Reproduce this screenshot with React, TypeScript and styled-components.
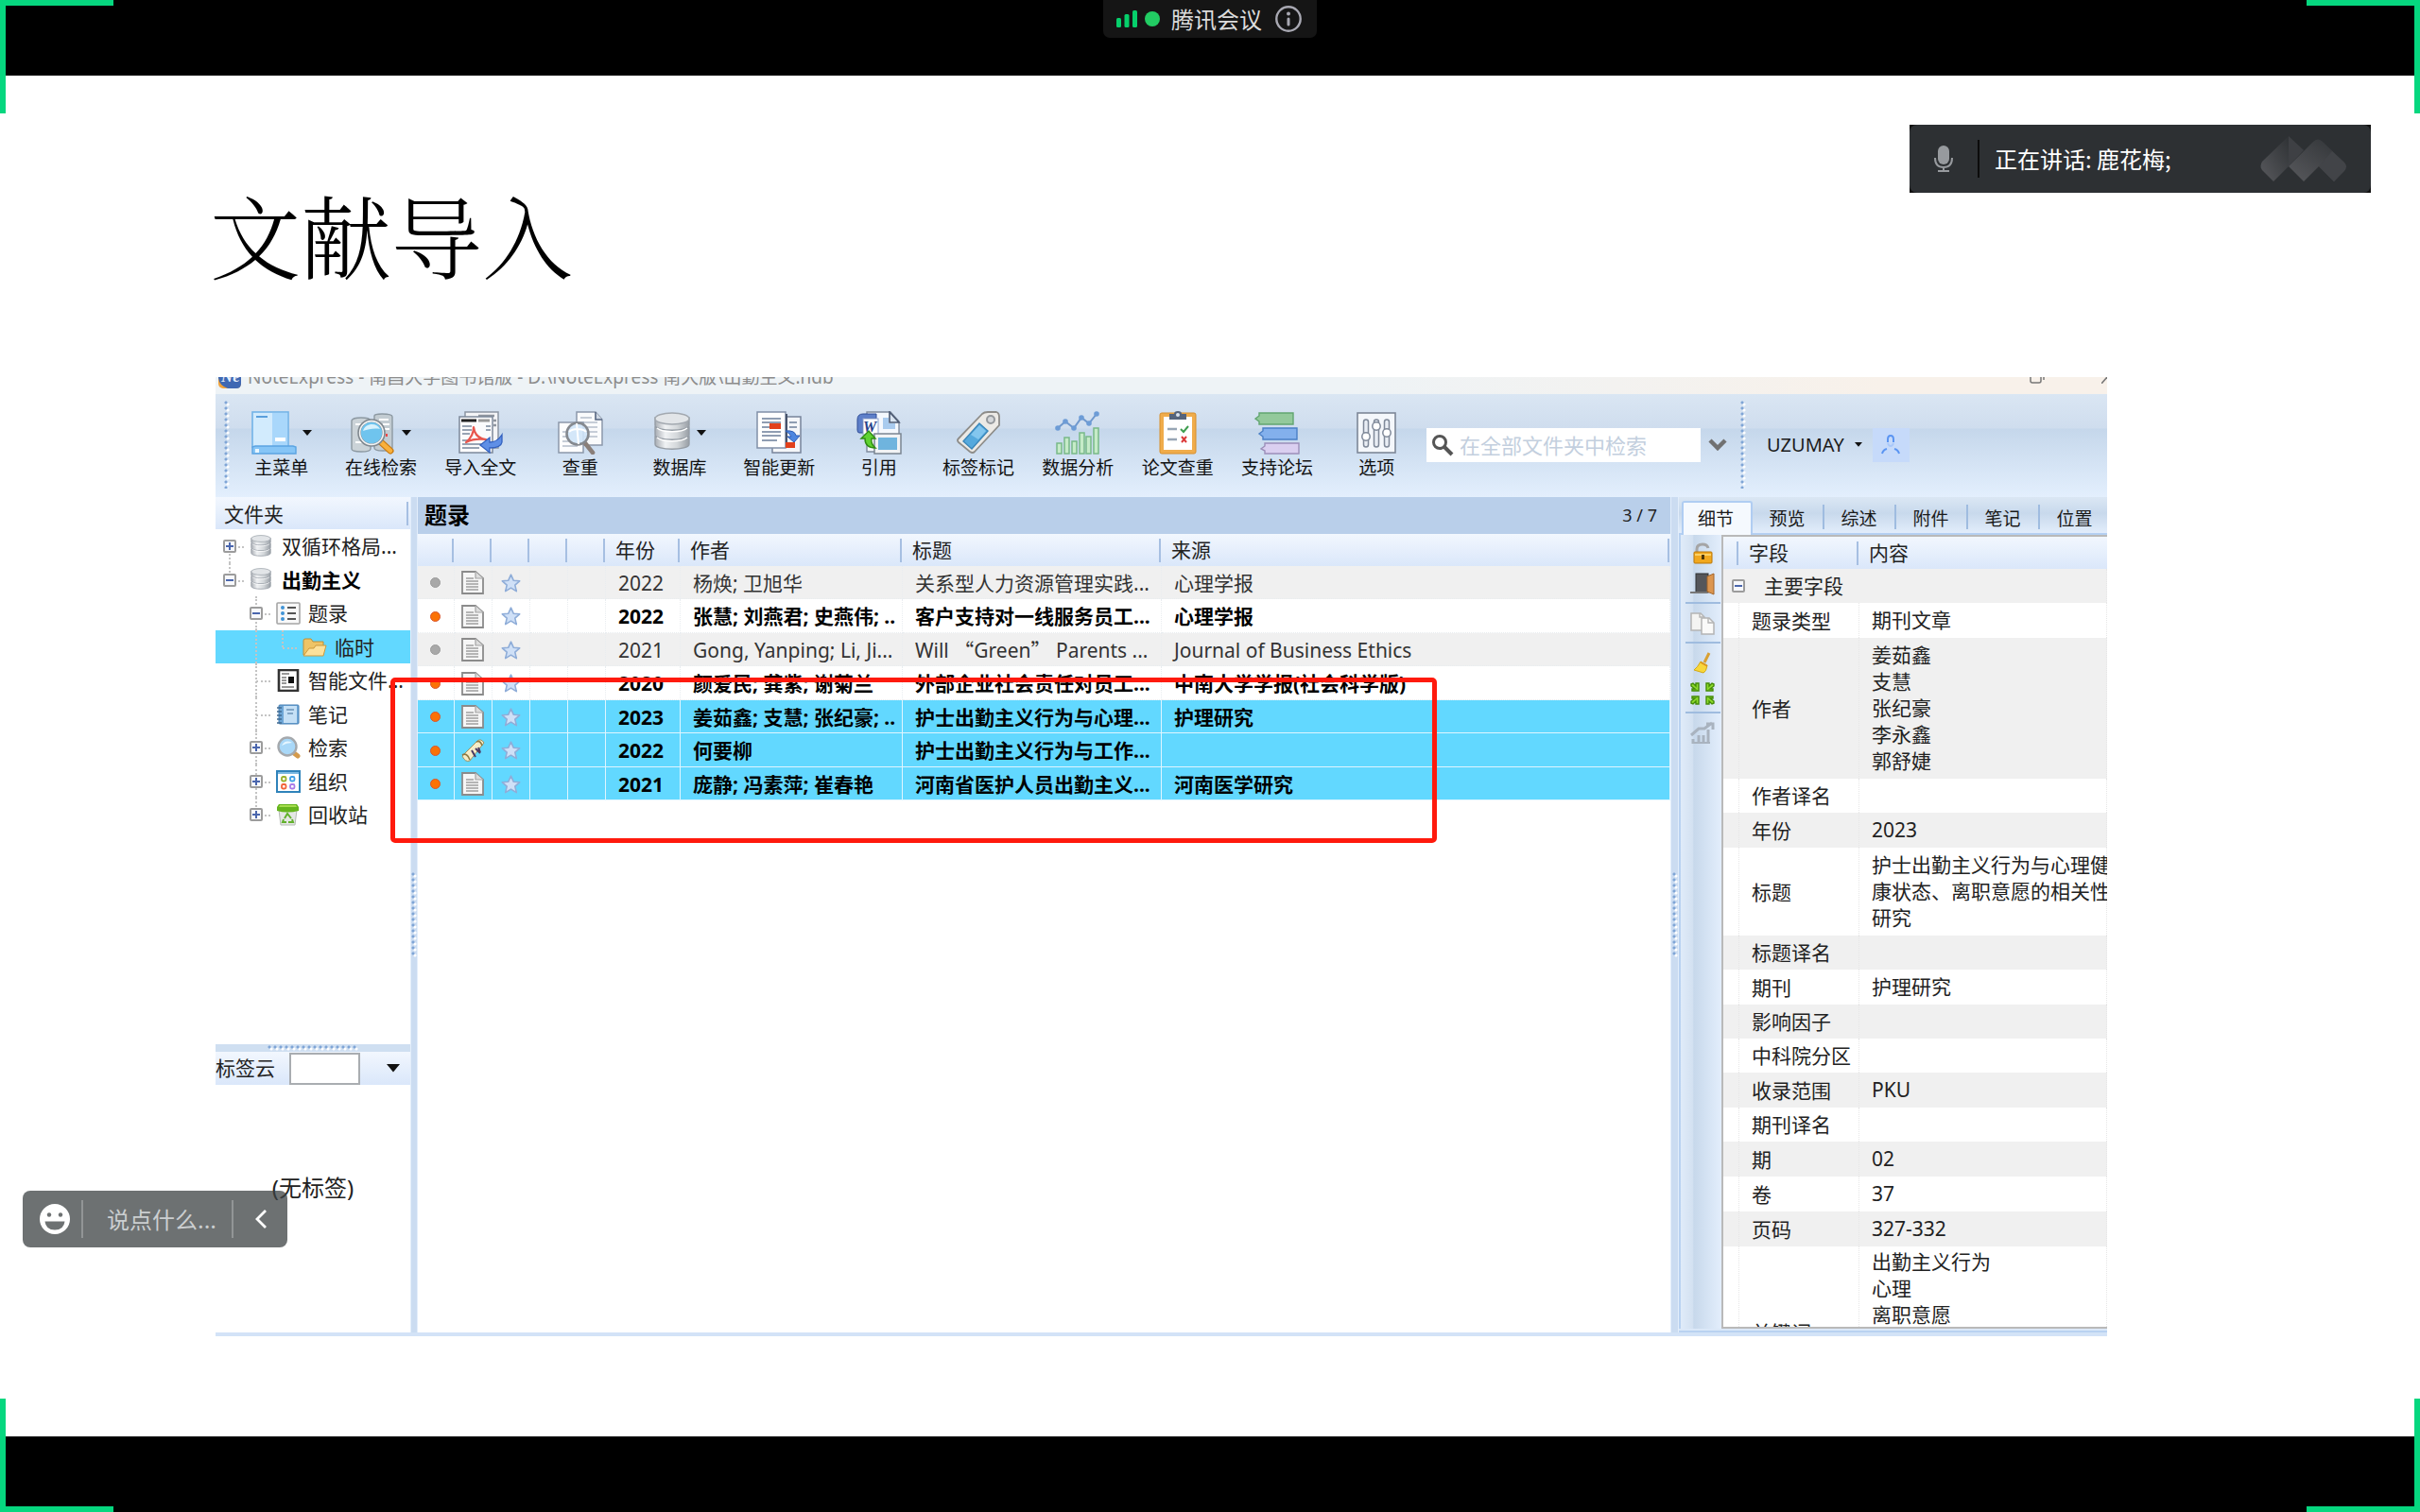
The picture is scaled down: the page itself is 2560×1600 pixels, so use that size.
import React from "react";
import styled, { createGlobalStyle, css } from "styled-components";

const sans = `"Noto Sans", "Noto Sans CJK SC", sans-serif`;
const cjk = `"Noto Sans CJK SC", "Noto Sans", sans-serif`;

const GlobalStyle = createGlobalStyle`
  *, *::before, *::after { box-sizing: border-box; }
  body { margin: 0; background: #fff; font-family: ${sans}; color: #222; }
  button, input { font: inherit; color: inherit; }
  button { padding: 0; border: 0; background: none; cursor: pointer; }
  svg { display: block; flex: none; }
`;

/* ---------- meeting shell ---------- */

const Page = styled.div`
  position: relative;
  display: flex;
  flex-direction: column;
  height: 100vh;
  min-height: 900px;
  overflow: hidden;
`;

const Letterbox = styled.div`
  display: flex;
  flex: none;
  justify-content: center;
  align-items: flex-start;
  height: 80px;
  background: #000;
`;

const Corner = styled.i<{ $v: "top" | "bottom"; $h: "left" | "right" }>`
  position: absolute;
  z-index: 3;
  width: 120px;
  height: 120px;
  pointer-events: none;
  ${({ $v, $h }) => css`
    ${$v}: 0;
    ${$h}: 0;
    border-${$v}: 6px solid #06d77f;
    border-${$h}: 6px solid #06d77f;
  `}
`;

const MeetingPill = styled.div`
  display: flex;
  align-items: center;
  height: 40px;
  padding: 0 16px 0 14px;
  border-radius: 0 0 7px 7px;
  background: #151515;
  color: #dcdcdc;
  font: 24px/40px ${cjk};
`;

const LiveDot = styled.i`
  width: 16px;
  height: 16px;
  margin: 0 12px 0 8px;
  border-radius: 50%;
  background: #22cc63;
`;

const InfoButton = styled.button`
  margin-left: 14px;
`;

const Speaker = styled.div`
  position: absolute;
  top: 132px;
  right: 52px;
  width: 488px;
  background: #111;
`;

const SpeakerInner = styled.div`
  display: flex;
  align-items: center;
  height: 72px;
  padding: 0 25px;
  border-radius: 8px;
  background: #2d3033;
  color: #fff;
  font: 24px/40px ${cjk};
`;

const SpeakerRule = styled.i`
  width: 2px;
  height: 40px;
  margin: 0 16px 0 25px;
  background: #0c0c0c;
`;

const SpeakerName = styled.span`
  flex: 1;
`;

const ChatPill = styled.form`
  position: absolute;
  left: 24px;
  bottom: 280px;
  z-index: 2;
  display: flex;
  align-items: center;
  width: 280px;
  height: 60px;
  padding: 0 22px 0 18px;
  border-radius: 8px;
  background: rgba(60, 65, 67, 0.75);
`;

const ChatInput = styled.input`
  flex: 1;
  min-width: 0;
  height: 40px;
  margin: 0 23px 0 12px;
  padding: 0 0 0 25px;
  border: solid #929596;
  border-width: 0 2px;
  outline: 0;
  background: transparent;
  color: #fff;
  font: 24px/40px ${cjk};
  &::placeholder { color: #cbced0; opacity: 1; }
`;

/* ---------- slide ---------- */

const Slide = styled.main`
  display: flex;
  flex: 1;
  flex-direction: column;
  min-height: 0;
  background: #fff;
`;

const SlideTitle = styled.h1`
  flex: none;
  margin: 119px 222px 104px;
  color: #000;
  font: 300 96px/96px "Noto Serif CJK SC", "Noto Sans CJK SC", serif;
`;

const Window = styled.section`
  position: relative;
  display: flex;
  flex: 1;
  flex-direction: column;
  min-height: 0;
  margin: 0 331px 106px 228px;
  border-bottom: 4px solid #d3e3f7;
`;

const TitleBar = styled.header`
  display: flex;
  flex: none;
  align-items: flex-start;
  height: 18px;
  padding-left: 2px;
  overflow: hidden;
  background: linear-gradient(90deg, #eef3f6 60%, #f8f1ea 88%);
  color: #8c8c8c;
`;

const TitleText = styled.span`
  align-self: flex-end;
  margin-left: 6px;
  padding-bottom: 6px;
  font-size: 19px;
  line-height: 24px;
  white-space: pre;
`;

const WindowButtons = styled.div`
  display: flex;
  gap: 60px;
  margin-left: auto;
`;

/* ---------- toolbar ---------- */

const Toolbar = styled.nav`
  display: flex;
  flex: none;
  align-items: center;
  height: 109px;
  padding: 0 0 2px 9px;
  background: linear-gradient(#dae6f3, #cfddee 33%, #c5d7eb 34%, #e3effd);
`;

const dots = css`
  background:
    radial-gradient(circle at 2px 2px, #7fa5d6 1px, transparent 2px) 0 0 / 6px 6px,
    radial-gradient(circle at 4px 4px, #fff 1px, transparent 2px) 0 0 / 6px 6px;
`;

const ToolGrip = styled.i`
  width: 6px;
  height: 93px;
  ${dots}
`;

const ToolList = styled.div`
  display: grid;
  grid-template-columns: repeat(12, 1fr);
  width: 1264px;
  margin-left: 2px;
`;

const ToolButton = styled.button`
  display: flex;
  flex-direction: column;
  align-items: center;
  color: #111;
  font: 19px/25px ${cjk};
`;

const ToolIcon = styled.span`
  display: flex;
  align-items: center;
  gap: 6px;
  height: 46px;
`;

const SearchBox = styled.label`
  display: flex;
  align-items: center;
  width: 290px;
  height: 36px;
  padding: 0 5px;
  background: #fff;
`;

const SearchInput = styled.input`
  flex: 1;
  min-width: 0;
  padding: 0 0 2px;
  margin-left: 6px;
  border: 0;
  outline: 0;
  background: none;
  font: 22px/32px ${cjk};
  &::placeholder { color: #c3cfde; opacity: 1; }
`;

const SearchMore = styled.button`
  margin: 0 14px 0 8px;
`;

const UserButton = styled.button`
  display: flex;
  align-items: center;
  gap: 11px;
  margin-left: 22px;
  color: #1c1c1c;
  font-size: 20px;
  line-height: 36px;
`;

const Avatar = styled.span`
  display: flex;
  align-items: center;
  justify-content: center;
  width: 39px;
  height: 36px;
  background: #c6dafa;
`;

/* ---------- workspace ---------- */

const Workspace = styled.div`
  display: flex;
  flex: 1;
  min-height: 0;
`;

const Splitter = styled.div<{ $w: number }>`
  display: flex;
  flex: none;
  align-items: center;
  justify-content: center;
  width: ${({ $w }) => $w}px;
  border: solid #e3eefb;
  border-width: 0 1px;
  background: #cbdcf1;
  &::before {
    content: "";
    width: 6px;
    height: 90px;
    ${dots}
  }
`;

const headFill = css`
  background-color: #e3edfb;
  background-image: linear-gradient(#f2f7fe, #dae7fa);
`;

const Sidebar = styled.aside`
  display: flex;
  flex: none;
  flex-direction: column;
  width: 206px;
  background: #fff;
`;

const SideHead = styled.h2`
  display: flex;
  flex: none;
  align-items: center;
  justify-content: space-between;
  height: 34px;
  margin: 0;
  padding: 0 2px 0 9px;
  font: 21px/34px ${cjk};
  ${headFill}
  &::after {
    content: "";
    width: 2px;
    height: 25px;
    background: #a6bfe2;
  }
`;

const Tree = styled.ul`
  flex: 1;
  min-height: 0;
  margin: 0;
  padding: 0;
  list-style: none;
`;

const TreeRow = styled.li<{ $selected?: boolean; $bold?: boolean }>`
  display: flex;
  align-items: center;
  height: 35px;
  padding-left: 8px;
  overflow: hidden;
  font-size: 21px;
  line-height: 34px;
  font-weight: ${({ $bold }) => ($bold ? 700 : 400)};
  color: ${({ $bold }) => ($bold ? "#000" : "#222")};
  background: ${({ $selected }) => ($selected ? "#62d8ff" : "transparent")};
  white-space: nowrap;
  &:nth-child(odd) { height: 36px; }
`;

const Guide = styled.span<{ $line: "none" | "full" | "top" | "bottom"; $branch?: boolean }>`
  position: relative;
  display: flex;
  flex: none;
  align-items: center;
  align-self: stretch;
  width: 28px;
  &::before {
    content: "";
    position: absolute;
    left: 6px;
    top: ${({ $line }) => ($line === "bottom" ? "50%" : "0")};
    bottom: ${({ $line }) => ($line === "top" ? "50%" : "0")};
    border-left: ${({ $line }) => ($line === "none" ? "0" : "2px dotted #c4c4c4")};
  }
  &::after {
    content: "";
    position: absolute;
    left: 7px;
    width: 15px;
    top: 50%;
    border-top: ${({ $branch }) => ($branch ? "2px dotted #c4c4c4" : "0")};
  }
`;

const Expander = styled.button`
  position: relative;
  z-index: 1;
  display: flex;
  align-items: center;
  justify-content: center;
  width: 14px;
  height: 14px;
  border: 2px solid #9c9c9c;
  border-radius: 2px;
  background: #f7f8fb;
`;

const TreeIcon = styled.span`
  display: flex;
  flex: none;
  width: 26px;
  margin-right: 8px;
`;

const TagSplitter = styled.div`
  display: flex;
  flex: none;
  justify-content: center;
  align-items: center;
  height: 8px;
  background: #cfdff1;
  &::before {
    content: "";
    width: 96px;
    height: 6px;
    ${dots}
  }
`;

const TagHead = styled.div`
  display: flex;
  flex: none;
  align-items: center;
  height: 35px;
  font: 21px/34px ${cjk};
  ${headFill}
`;

const TagLabel = styled.label`
  padding-bottom: 4px;
`;

const TagInput = styled.input`
  width: 75px;
  height: 34px;
  margin: 0 28px 0 15px;
  padding: 0 6px;
  border: 2px solid #a9adb1;
  border-radius: 0;
  outline: 0;
  background: #fff;
`;

const TagEmpty = styled.p`
  flex: none;
  height: 262px;
  margin: 0;
  padding-top: 91px;
  text-align: center;
  font-size: 24px;
  line-height: 36px;
`;

/* ---------- records ---------- */

const Records = styled.section`
  flex: 1;
  min-width: 0;
  overflow: hidden;
  background: #fff;
`;

const RecordsBar = styled.div`
  display: flex;
  align-items: center;
  justify-content: space-between;
  height: 39px;
  padding: 0 14px 2px 7px;
  background: #b9cfea;
  font-size: 18px;
`;

const RecordsTitle = styled.h2`
  margin: 0;
  padding-bottom: 2px;
  color: #000;
  font: 700 24px/34px ${cjk};
`;

const Grid = styled.table`
  width: 100%;
  table-layout: fixed;
  border-collapse: separate;
  border-spacing: 0;
  font-size: 21px;
  text-align: left;
`;

const GridHead = styled.th<{ $open?: boolean }>`
  height: 34px;
  padding: 0 0 0 10px;
  font-weight: 400;
  line-height: 32px;
  background-image: linear-gradient(#a6bfe2, #a6bfe2), linear-gradient(#f2f7fe, #dae7fa);
  background-position: right 1px center, 0 0;
  background-repeat: no-repeat;
  background-size: ${({ $open }) => ($open ? "0 0" : "2px 25px")}, 100% 100%;
`;

const Cell = styled.td<{ $icon?: boolean }>`
  padding: ${({ $icon }) => ($icon ? "1px 1px 0 0" : "1px 0 0 13px")};
  overflow: hidden;
  border: 0 dotted #e9edf0;
  border-width: 0 1px 1px 0;
  line-height: 32px;
  white-space: nowrap;
  & > svg { margin: 0 auto; }
`;

const RecordRow = styled.tr<{ $unread?: boolean; $selected?: boolean }>`
  height: 35px;
  font-weight: ${({ $unread }) => ($unread ? 700 : 400)};
  color: ${({ $unread }) => ($unread ? "#000" : "#333")};
  background: ${({ $unread, $selected }) => ($selected ? "#62d8ff" : $unread ? "#fff" : "#f0f0f0")};
  &:nth-child(even) { height: 36px; }
  ${({ $selected }) => $selected && css`
    ${Cell} { border-color: #dff5ff; border-style: solid; }
  `}
`;

const StateDot = styled.i<{ $on?: boolean }>`
  display: block;
  width: 11px;
  height: 11px;
  margin: 0 auto;
  border: 1px solid ${({ $on }) => ($on ? "#d9562f" : "#9b9b9b")};
  border-radius: 50%;
  background: ${({ $on }) => ($on ? "#fb7206" : "#a8a8a8")};
`;

const Quote = styled.span`
  font-family: ${cjk};
`;

const Callout = styled.div`
  position: absolute;
  left: 185px;
  top: 318px;
  width: 1107px;
  height: 175px;
  border: 5px solid #ff1a0d;
  border-radius: 5px;
  pointer-events: none;
`;

/* ---------- details ---------- */

const Details = styled.section`
  display: flex;
  flex: none;
  flex-direction: column;
  width: 453px;
  overflow: hidden;
  background: #dbe8f8;
  border-bottom: 2px solid #b9d2f1;
`;

const Tabs = styled.div`
  display: flex;
  flex: none;
  height: 40px;
  padding-left: 3px;
  border-bottom: 2px solid #b5d0f2;
  background: linear-gradient(#dbe7f4, #c8d9ec 45%, #e2edfb);
`;

const Tab = styled.button<{ $active?: boolean }>`
  flex: none;
  padding: 0 3px 3px 0;
  font: 19px/28px ${cjk};
  color: #1a1a1a;
  ${({ $active }) => $active ? css`
    width: 75px;
    height: 36px;
    margin-top: 4px;
    border: 2px solid #b0cdf2;
    border-bottom: 0;
    border-radius: 3px 3px 0 0;
    background: #f5f9fe;
  ` : css`
    width: 76px;
    height: 30px;
    margin-top: 8px;
    background: linear-gradient(#9fbce0, #9fbce0) right 0 top 0 / 2px 26px no-repeat;
  `}
`;

const DetailBody = styled.div`
  display: flex;
  flex: 1;
  min-height: 0;
  padding-bottom: 2px;
`;

const DetailTools = styled.div`
  display: flex;
  flex: none;
  flex-direction: column;
  align-items: center;
  gap: 6px;
  width: 45px;
  padding: 7px 0 0 3px;
  border-left: 2px solid #b9d2f1;
  background: linear-gradient(90deg, #e0ebf9, #d3e1f1 30%, #c7d8eb 32%, #e3eefc);
`;

const ToolRule = styled.hr`
  width: 37px;
  height: 2px;
  margin: 0 0 2px;
  border: 0;
  background: #9fbcdf;
`;

const DetailScroll = styled.div`
  flex: 1;
  min-width: 0;
  overflow: hidden;
  border: solid #b9b9b9;
  border-width: 2px 0 2px 2px;
  background: #fff;
`;

const FieldTable = styled.table`
  width: 100%;
  table-layout: fixed;
  border-collapse: separate;
  border-spacing: 0;
  font-size: 21px;
  line-height: 28px;
  text-align: left;
  white-space: nowrap;
`;

const FieldRow = styled.tr`
  height: 36px;
  &:nth-child(odd) { background: #f0f0f0; }
  & > td, & > th {
    padding: 4px 0 5px 13px;
    border: 0 dotted #e6e6e6;
    border-width: 0 1px 0 0;
    font-weight: 400;
  }
  & > th, & > td:empty { padding-top: 0; padding-bottom: 0; }
`;

const OpenFieldRow = styled(FieldRow)`
  height: 181px;
  & > td { padding-top: 2px; vertical-align: top; }
`;

const GroupCell = styled.div`
  display: flex;
  align-items: center;
  gap: 20px;
  height: 26px;
  margin-left: -4px;
`;

const Line = styled.div``;

/* ---------- icons ---------- */

const Minus = ({ plus }: { plus?: boolean }) => (
  <svg width="10" height="10" viewBox="0 0 10 10" stroke="#4a66ad" strokeWidth="2">
    <path d={plus ? "M1 5h8M5 1v8" : "M1 5h8"} />
  </svg>
);

const Caret = ({ w = 10 }: { w?: number }) => (
  <svg width={w} height={w * 0.6} viewBox="0 0 10 6"><path d="M0 0h10L5 6z" fill="#111" /></svg>
);

const Cylinder = ({ w, h }: { w: number; h: number }) => (
  <svg width={w} height={h} viewBox="0 0 38 44">
    <defs>
      <linearGradient id="cyl" x1="0" x2="1">
        <stop offset="0" stopColor="#a8adb3" /><stop offset=".3" stopColor="#f0f2f4" />
        <stop offset=".65" stopColor="#d3d7da" /><stop offset="1" stopColor="#989ea5" />
      </linearGradient>
    </defs>
    {[30, 20, 10].map((y) => (
      <path key={y} d={`M1 ${y - 4}v8c0 7 36 7 36 0v-8z`} fill="url(#cyl)" stroke="#969da5" strokeWidth="1.4" />
    ))}
    <ellipse cx="19" cy="7" rx="18" ry="6" fill="#e2e5e8" stroke="#a3a9b0" strokeWidth="1.4" />
    <path d="M3 17c6 5 26 5 32 0M3 27c6 5 26 5 32 0" fill="none" stroke="#fff" strokeWidth="1.3" />
  </svg>
);

const Ic = ({ children }: { children: React.ReactNode }) => (
  <svg width="48" height="46" viewBox="0 0 48 46">{children}</svg>
);

const MenuIcon = () => (
  <Ic>
    <rect x="1" y="1" width="38" height="37" fill="#d2ebfd" stroke="#72b3e8" strokeWidth="1.6" />
    <rect x="22" y="2" width="16" height="35" fill="#a9d7fb" />
    <path d="M5 6h12" stroke="#5a9fdc" strokeWidth="2" />
    <rect x="25" y="28" width="11" height="4" fill="#fff" />
    <path d="M1 38l3-1h40l3 1v7H1z" fill="#86c5f6" stroke="#5ba4e2" strokeWidth="1.4" />
    <rect x="4" y="40" width="4" height="4" fill="#e9f6ff" />
  </Ic>
);

const OnlineIcon = () => (
  <Ic>
    <path d="M25 5q0-2 8-2 11 0 11 3v33q0 3-10 3-9 0-9-3z" fill="#c3ccd2" stroke="#8d99a2" strokeWidth="1.4" />
    <path d="M1 10q1-3 10-3t10 3v30q0 3-10 3T1 40z" fill="#cbd3d8" stroke="#8d99a2" strokeWidth="1.4" />
    <path d="M5 14h12M5 33h8M30 9h10M34 14h7M36 19h5" stroke="#fff" strokeWidth="2" />
    <path d="M31 32l11 10" stroke="#c77a12" strokeWidth="7" strokeLinecap="round" />
    <path d="M31 32l11 10" stroke="#f9b03b" strokeWidth="4.5" strokeLinecap="round" />
    <circle cx="22" cy="23" r="13" fill="#6fc4ee" stroke="#80888f" strokeWidth="3.6" />
    <circle cx="22" cy="23" r="12.4" fill="none" stroke="#f2f4f5" strokeWidth="1.6" />
    <path d="M13 21c2-8 14-10 18-2-6-1-12 0-18 2z" fill="#d8f2fd" />
    <path d="M38 24v3" stroke="#e44" strokeWidth="2" />
  </Ic>
);

const ImportIcon = () => (
  <Ic>
    <path d="M8 1h35v38H8z" fill="#f4f5f7" stroke="#8c95a3" strokeWidth="1.5" />
    <path d="M22 5h17M38 10h3M38 15h3" stroke="#8f959e" strokeWidth="2.4" />
    <path d="M2 6h35v38H2z" fill="#fbfbfc" stroke="#7d899b" strokeWidth="1.5" />
    <path d="M4 10h16" stroke="#222" strokeWidth="3" />
    <path d="M22 10h12" stroke="#999" strokeWidth="3" />
    <path d="M5 16h10M5 20h10M5 24h8M5 31h6M5 35h22M5 39h18M30 16h5M30 20h5" stroke="#98a3b3" strokeWidth="2" />
    <path d="M9 33c5-4 8-9 8-16 1 8 5 12 13 13-8-1-15 0-21 3z" fill="none" stroke="#e8564d" strokeWidth="2.2" strokeLinejoin="round" />
    <path d="M47 25v8q-1 6-13 6v5l-10-8 10-8v5q8 0 13-8z" fill="#5f8fe6" stroke="#3260bf" strokeWidth="1.3" />
  </Ic>
);

const CheckDupIcon = () => (
  <Ic>
    <path d="M20 1h20l7 8v27H20z" fill="#fafbfc" stroke="#8c98ab" strokeWidth="1.5" />
    <path d="M40 1v8h7" fill="#cfd8e4" stroke="#566681" strokeWidth="1.6" />
    <path d="M24 7h12M24 12h18M24 17h18M24 22h18M24 27h18" stroke="#c6cdd7" strokeWidth="2" />
    <path d="M1 12h26v32H1z" fill="#fdfdfe" stroke="#8c98ab" strokeWidth="1.5" />
    <path d="M5 22h6M5 27h6M5 32h8M5 37h16" stroke="#c6cdd7" strokeWidth="2" />
    <path d="M29 34l8 10" stroke="#8a7f79" strokeWidth="4.6" strokeLinecap="round" />
    <circle cx="21" cy="24" r="11.5" fill="#cfe4f8" fillOpacity=".9" stroke="#85898f" strokeWidth="2.6" />
    <path d="M12 22c4-4 14-4 18 0M20 13l2 22" stroke="#fff" strokeWidth="2" fill="none" />
  </Ic>
);

const UpdateIcon = () => (
  <Ic>
    <path d="M17 6h30v38H17z" fill="#f4f6f9" stroke="#77849a" strokeWidth="1.5" />
    <path d="M1 1h30v38H1z" fill="#fff" stroke="#8190a8" strokeWidth="1.5" />
    <path d="M32 3v36" stroke="#46536b" strokeWidth="2" />
    <path d="M6 8h20M6 12h20M6 17h8M6 22h20M6 26h20M6 31h16M35 12h8M35 17h8" stroke="#8f9db2" strokeWidth="2" />
    <rect x="14" y="13" width="12" height="6" fill="#e2401b" />
    <rect x="31" y="33" width="10" height="6" fill="#e2401b" />
    <path d="M31 21q10-1 11 5h4l-6 7-7-6h4q-1-3-6-6z" fill="#4d86e0" stroke="#2c5cb5" />
  </Ic>
);

const CiteIcon = () => (
  <Ic>
    <path d="M11 1h25l9 10v32H11z" fill="#f4f8fd" stroke="#7f8b9c" strokeWidth="1.4" />
    <path d="M35 1v11h10z" fill="#d9e4f0" stroke="#4c5a72" strokeWidth="1.6" />
    <path d="M28 7h6v6h7v6H28z" fill="#a9cbee" />
    <path d="M1 9q0-6 6-6h14v5H9q-2 0-2 3v12H3q-2 0-2-3z" fill="#5d7fc9" stroke="#2f4c96" />
    <rect x="7" y="8" width="16" height="17" fill="#fff" stroke="#8fa3d0" />
    <text x="7" y="22" fontSize="16" fontWeight="700" fontStyle="italic" fill="#27418a" fontFamily="Liberation Serif, serif">W</text>
    <path d="M19 24h28v21H19z" fill="#f1f3f5" stroke="#7a8591" strokeWidth="1.5" />
    <rect x="23" y="28" width="20" height="13" fill="#6fb4de" />
    <path d="M5 29l8-8 7 8h-4q-1 6 4 10-11 0-11-10z" fill="#5fd232" stroke="#2f8c12" strokeWidth="1.4" />
  </Ic>
);

const TagIcon = () => (
  <Ic>
    <path d="M28 3q2-2 6-2h9q3 1 3 5v9L20 43q-2 2-5 0L3 33q-2-2 0-4z" fill="#eceae6" stroke="#8d8c89" strokeWidth="1.8" />
    <circle cx="37" cy="9" r="4" fill="#d5d8db" stroke="#94989c" strokeWidth="2" />
    <path d="M25 13l9 8-17 19-9-8z" fill="#55a9dd" stroke="#3b87ba" strokeWidth="1.4" />
    <path d="M25 15l7 6-8 9-8-5z" fill="#83c6ee" />
  </Ic>
);

const AnalysisIcon = () => (
  <Ic>
    <path d="M3 18l8-7 9 7 8-11 8 6 8-10" fill="none" stroke="#6f98cd" strokeWidth="2" />
    {[[3, 18], [11, 11], [20, 18], [28, 7], [36, 13], [44, 3]].map(([x, y]) => (
      <circle key={x} cx={x} cy={y} r="2.8" fill="#6d9cd6" />
    ))}
    {[[2, 34], [10, 28], [18, 32], [26, 23], [33, 27], [41, 18]].map(([x, y]) => (
      <rect key={x} x={x} y={y} width="5" height={45 - y} fill="#c6ebc8" stroke="#78b988" strokeWidth="1.5" />
    ))}
  </Ic>
);

const ClipboardIcon = () => (
  <Ic>
    <rect x="5" y="2" width="38" height="43" rx="2" fill="#f0ac4b" stroke="#d78f2d" />
    <rect x="9" y="6" width="30" height="35" fill="#fff" />
    <path d="M15 3h5q0-3 4-3t4 3h5v6H15z" fill="#55647c" />
    <circle cx="24" cy="4" r="2" fill="#dbe3ee" />
    <path d="M13 19h10M13 30h10" stroke="#98a6b5" strokeWidth="2.4" />
    <path d="M27 19l3 3 5-6" fill="none" stroke="#3e9e4f" strokeWidth="2" />
    <path d="M28 27l5 6M33 27l-5 6" stroke="#dc3a3a" strokeWidth="2" />
  </Ic>
);

const ForumIcon = () => (
  <Ic>
    <path d="M5 2h36v12H5v-3L1 8l4-3z" fill="#93c99b" stroke="#62a570" strokeWidth="1.4" />
    <path d="M9 18h36v12H9v-3l-4-3 4-3z" fill="#83b0ec" stroke="#4a7fc6" strokeWidth="1.4" />
    <path d="M11 34h36v11H11v-3l-4-2 4-3z" fill="#dacff0" stroke="#9c8fb9" strokeWidth="1.4" />
  </Ic>
);

const OptionsIcon = () => (
  <Ic>
    <rect x="4" y="2" width="40" height="42" fill="#f4f7fb" stroke="#7d8798" strokeWidth="1.6" />
    {[[13, 27], [24, 16], [35, 23]].map(([x, y]) => (
      <g key={x} fill="#e9eef5" stroke="#7f8999" strokeWidth="1.5">
        <rect x={x - 2.5} y="9" width="5" height="29" rx="2.5" />
        <circle cx={x} cy={y} r="4.2" fill="#fff" />
      </g>
    ))}
  </Ic>
);

const ListIcon = () => (
  <svg width="26" height="24" viewBox="0 0 26 24">
    <rect x="1" y="1" width="24" height="22" rx="1" fill="#f8f8f8" stroke="#a5a5a5" strokeWidth="1.6" />
    {[6, 12, 18].map((y) => (
      <g key={y}><circle cx="7" cy={y} r="2" fill="#3f93d6" /><path d={`M12 ${y}h9`} stroke="#555" strokeWidth="2" /></g>
    ))}
  </svg>
);

const FolderIcon = () => (
  <svg width="26" height="20" viewBox="0 0 26 20">
    <path d="M1 18V3q0-2 2-2h6l2 3h11v14z" fill="#eec466" stroke="#c08f35" />
    <path d="M1 19l6-8h5l2-3h11l-3 11z" fill="#fde19a" stroke="#cc9a3d" />
  </svg>
);

const SmartIcon = () => (
  <svg width="26" height="24" viewBox="0 0 26 24">
    <rect x="3" y="1" width="20" height="22" fill="#fff" stroke="#333" strokeWidth="2.6" />
    <path d="M6 5h8M6 9h5M6 12h5M6 15h5M6 19h13" stroke="#777" strokeWidth="1.4" />
    <rect x="13" y="8" width="6" height="7" fill="#111" />
  </svg>
);

const NotebookIcon = () => (
  <svg width="26" height="22" viewBox="0 0 26 22">
    <rect x="3" y="1" width="21" height="20" rx="1" fill="#6ea6d6" stroke="#457fb4" />
    <rect x="8" y="2" width="14" height="18" fill="#c5e0f6" />
    <path d="M11 6h8M12 10h6" stroke="#6c93b7" strokeWidth="1.4" />
    <path d="M1 4h5M1 8h5M1 12h5M1 16h5M1 20h5" stroke="#3f6a90" strokeWidth="1.4" />
  </svg>
);

const LensIcon = () => (
  <svg width="26" height="24" viewBox="0 0 26 24">
    <path d="M19 18l4 3" stroke="#d49a4c" strokeWidth="5" strokeLinecap="round" />
    <circle cx="12" cy="11" r="9.5" fill="#a9d8f8" stroke="#a5a9ad" strokeWidth="2.4" />
    <path d="M6 10q4-7 11-3-6 0-11 3z" fill="#e7f6ff" />
  </svg>
);

const GroupIcon = () => (
  <svg width="26" height="24" viewBox="0 0 26 24">
    <rect x="1" y="1" width="24" height="22" fill="#fff" stroke="#2f83ba" strokeWidth="2" />
    <path d="M2 3h22" stroke="#7cb9e2" strokeWidth="2" />
    {[[6, 7, "#98b02a"], [15, 7, "#3fa0e6"], [6, 15, "#f2633a"], [15, 15, "#a97be8"]].map(([x, y, c]) => (
      <rect key={`${x}${y}`} x={x as number} y={y as number} width="4.5" height="4.5" rx="1.5" fill="none" stroke={c as string} strokeWidth="1.8" />
    ))}
  </svg>
);

const BinIcon = () => (
  <svg width="26" height="24" viewBox="0 0 26 24">
    <path d="M3 7h19l-2 16H5z" fill="#e4e7e4" stroke="#b4bab3" />
    <path d="M3 1h19l2 3v4q-12 3-23 0V4z" fill="#66b51e" />
    <path d="M4 2h17l1 2H3z" fill="#a4dc4c" />
    <path d="M9 16l3-5 4 5M17 17l1 3h-5M8 17l-1 3h4" fill="none" stroke="#62b12d" strokeWidth="2" />
  </svg>
);

const PaperIcon = () => (
  <svg width="24" height="25" viewBox="0 0 24 25">
    <path d="M1 1h14l8 7v16H1z" fill="#f6f6f6" stroke="#8b8b8b" strokeWidth="1.8" />
    <path d="M15 1v7h8" fill="#ddd" stroke="#a5a5a5" strokeWidth="1.2" />
    <path d="M5 8h8M5 11h13M5 14h13M5 17h13M5 20h13" stroke="#a0a0a0" strokeWidth="1.6" />
  </svg>
);

const ScrollIcon = () => (
  <svg width="26" height="25" viewBox="0 0 26 25">
    <path d="M2 18L18 2q4-3 7 2L10 23q-5 2-8-5z" fill="#f6ecc7" stroke="#a38f5c" />
    <path d="M2 17q5-3 8 5M17 3q4-2 6 4" fill="none" stroke="#8d7a45" strokeWidth="1.6" />
    <path d="M12 12l4 7M16 10l5 5M19 9l2 5" stroke="#4a3a63" strokeWidth="2" />
  </svg>
);

const StarIcon = () => (
  <svg width="21" height="20" viewBox="0 0 21 20">
    <path d="M10.500 1.200l2.700 6 6.500.6-4.900 4.300 1.500 6.500-5.800-3.500-5.800 3.500 1.500-6.500L1.300 7.800l6.500-.6z" fill="#cfe0f7" stroke="#8fadd8" strokeWidth="1.6" strokeLinejoin="round" />
  </svg>
);

const Ic26 = ({ children }: { children: React.ReactNode }) => (
  <svg width="26" height="26" viewBox="0 0 26 26">{children}</svg>
);

const LockIcon = () => (
  <Ic26>
    <path d="M7 12V8q0-5 6-5 5 0 6 4" fill="none" stroke="#a5a5a5" strokeWidth="3" />
    <rect x="4" y="11" width="19" height="12" rx="1" fill="#f1a81e" stroke="#b97708" />
    <path d="M5 14h17" stroke="#fbd167" strokeWidth="2" />
    <path d="M13.500 14v5" stroke="#4f3606" strokeWidth="3" />
  </Ic26>
);
const DoorIcon = () => (
  <Ic26>
    <rect x="6" y="2" width="13" height="20" fill="#55565a" stroke="#2f3033" />
    <path d="M18 5l7-3v22l-7-3z" fill="#dc9650" stroke="#a3652a" />
    <path d="M0 22h18" stroke="#777" strokeWidth="2" />
  </Ic26>
);
const CopyIcon = () => (
  <Ic26>
    <path d="M1 2h10l4 4v14H1z" fill="#f4f4f2" stroke="#b4b4b4" strokeWidth="1.5" />
    <path d="M12 7h8l5 5v12H12z" fill="#fafaf9" stroke="#b4b4b4" strokeWidth="1.5" />
    <path d="M10 2v4h5M19 7v5h6" fill="none" stroke="#b4b4b4" strokeWidth="1.4" />
  </Ic26>
);
const BroomIcon = () => (
  <Ic26>
    <path d="M20 2l-5 10" stroke="#d9a033" strokeWidth="3" />
    <path d="M11 11l7 4q-1 7-4 8l-10-3q4-3 7-9z" fill="#f8d73a" stroke="#d4a916" />
    <path d="M11 12l7 4" stroke="#dd8d21" strokeWidth="1.4" />
  </Ic26>
);
const ShrinkIcon = () => (
  <Ic26>
    <g fill="#8ddb2c" stroke="#448c08" strokeWidth="1.4">
      {["", "translate(26 0) scale(-1 1)", "translate(0 26) scale(1 -1)", "translate(26 26) scale(-1 -1)"].map((t) => (
        <path key={t} transform={t} d="M1 3l2-1 3 3V2h3v8H2V8h3L1 5z" />
      ))}
    </g>
  </Ic26>
);
const TrendIcon = () => (
  <Ic26>
    <g fill="none" stroke="#a9b3bf" strokeWidth="3">
      <path d="M1 15l8-7h6l8-6M17 3h7v6" />
      <path d="M3 19v5M9 15v9M14 15v9M19 9v15" />
      <path d="M2 23h19" strokeWidth="2" />
    </g>
  </Ic26>
);

/* ---------- data ---------- */

const tools: [string, React.ReactNode, boolean?][] = [
  ["主菜单", <MenuIcon />, true],
  ["在线检索", <OnlineIcon />, true],
  ["导入全文", <ImportIcon />],
  ["查重", <CheckDupIcon />],
  ["数据库", <Cylinder w={40} h={44} />, true],
  ["智能更新", <UpdateIcon />],
  ["引用", <CiteIcon />],
  ["标签标记", <TagIcon />],
  ["数据分析", <AnalysisIcon />],
  ["论文查重", <ClipboardIcon />],
  ["支持论坛", <ForumIcon />],
  ["选项", <OptionsIcon />],
];

type LineKind = "none" | "full" | "top" | "bottom";
interface Node {
  label: string;
  icon: React.ReactNode;
  lines: LineKind[];
  box?: "+" | "-";
  bold?: boolean;
  selected?: boolean;
}

const nodes: Node[] = [
  { label: "双循环格局...", icon: <Cylinder w={24} h={25} />, lines: ["bottom"], box: "+" },
  { label: "出勤主义", icon: <Cylinder w={24} h={25} />, lines: ["top"], box: "-", bold: true },
  { label: "题录", icon: <ListIcon />, lines: ["none", "full"], box: "-" },
  { label: "临时", icon: <FolderIcon />, lines: ["none", "full", "top"], selected: true },
  { label: "智能文件...", icon: <SmartIcon />, lines: ["none", "full"] },
  { label: "笔记", icon: <NotebookIcon />, lines: ["none", "full"] },
  { label: "检索", icon: <LensIcon />, lines: ["none", "full"], box: "+" },
  { label: "组织", icon: <GroupIcon />, lines: ["none", "full"], box: "+" },
  { label: "回收站", icon: <BinIcon />, lines: ["none", "top"], box: "+" },
];

interface Rec {
  year: string;
  authors: string;
  title: React.ReactNode;
  source: string;
  unread?: boolean;
  selected?: boolean;
  scroll?: boolean;
}

const records: Rec[] = [
  { year: "2022", authors: "杨焕; 卫旭华", title: "关系型人力资源管理实践...", source: "心理学报" },
  { year: "2022", authors: "张慧; 刘燕君; 史燕伟; ..", title: "客户支持对一线服务员工...", source: "心理学报", unread: true },
  { year: "2021", authors: "Gong, Yanping; Li, Ji...", title: <>Will <Quote>“</Quote>Green<Quote>”</Quote> Parents ...</>, source: "Journal of Business Ethics" },
  { year: "2020", authors: "颜爱民; 龚紫; 谢菊兰", title: "外部企业社会责任对员工...", source: "中南大学学报(社会科学版)", unread: true },
  { year: "2023", authors: "姜茹鑫; 支慧; 张纪豪; ..", title: "护士出勤主义行为与心理...", source: "护理研究", unread: true, selected: true },
  { year: "2022", authors: "何要柳", title: "护士出勤主义行为与工作...", source: "", unread: true, selected: true, scroll: true },
  { year: "2021", authors: "庞静; 冯素萍; 崔春艳", title: "河南省医护人员出勤主义...", source: "河南医学研究", unread: true, selected: true },
];

const fields: [string, string[]][] = [
  ["题录类型", ["期刊文章"]],
  ["作者", ["姜茹鑫", "支慧", "张纪豪", "李永鑫", "郭舒婕"]],
  ["作者译名", []],
  ["年份", ["2023"]],
  ["标题", ["护士出勤主义行为与心理健", "康状态、离职意愿的相关性", "研究"]],
  ["标题译名", []],
  ["期刊", ["护理研究"]],
  ["影响因子", []],
  ["中科院分区", []],
  ["收录范围", ["PKU"]],
  ["期刊译名", []],
  ["期", ["02"]],
  ["卷", ["37"]],
  ["页码", ["327-332"]],
];

/* ---------- sections ---------- */

const ToolbarSection = () => (
  <Toolbar>
    <ToolGrip />
    <ToolList>
      {tools.map(([label, icon, menu]) => (
        <ToolButton key={label} type="button">
          <ToolIcon>{icon}{menu && <Caret />}</ToolIcon>
          {label}
        </ToolButton>
      ))}
    </ToolList>
    <SearchBox>
      <svg width="24" height="24" viewBox="0 0 24 24" fill="none" stroke="#555">
        <circle cx="9" cy="9" r="6.500" strokeWidth="3" />
        <path d="M14 14l8 8" strokeWidth="4" />
      </svg>
      <SearchInput placeholder="在全部文件夹中检索" aria-label="检索" />
    </SearchBox>
    <SearchMore type="button" aria-label="更多">
      <svg width="20" height="13" viewBox="0 0 20 13"><path d="M2 2l8 8 8-8" fill="none" stroke="#717171" strokeWidth="4.500" /></svg>
    </SearchMore>
    <ToolGrip />
    <UserButton type="button">
      UZUMAY
      <Caret w={8} />
      <Avatar>
        <svg width="22" height="22" viewBox="0 0 22 22" fill="none" stroke="#5b95f2" strokeWidth="2">
          <path d="M8 8V5q0-4 3-4t3 4v3M2 20q1-4 5-5M20 20q-1-4-5-5" />
          <path d="M8 9q1 3 3 3t3-3" stroke="#a9c8fa" />
        </svg>
      </Avatar>
    </UserButton>
  </Toolbar>
);

const SidebarSection = () => (
  <Sidebar>
    <SideHead>文件夹</SideHead>
    <Tree>
      {nodes.map((n) => (
        <TreeRow key={n.label} $bold={n.bold} $selected={n.selected}>
          {n.lines.map((line, i) => {
            const own = i === n.lines.length - 1;
            return (
              <Guide key={i} $line={line} $branch={own}>
                {own && n.box && (
                  <Expander type="button" aria-label={n.box}><Minus plus={n.box === "+"} /></Expander>
                )}
              </Guide>
            );
          })}
          <TreeIcon>{n.icon}</TreeIcon>
          {n.label}
        </TreeRow>
      ))}
    </Tree>
    <TagSplitter />
    <TagHead>
      <TagLabel htmlFor="tag-filter">标签云</TagLabel>
      <TagInput id="tag-filter" />
      <button type="button" aria-label="展开"><Caret w={14} /></button>
    </TagHead>
    <TagEmpty>(无标签)</TagEmpty>
  </Sidebar>
);

const RecordsSection = () => (
  <Records>
    <RecordsBar>
      <RecordsTitle>题录</RecordsTitle>
      <span>3 / 7</span>
    </RecordsBar>
    <Grid>
      <colgroup>
        <col width="39" /><col width="40" /><col width="40" /><col width="40" /><col width="40" />
        <col width="79" /><col width="235" /><col width="274" /><col />
      </colgroup>
      <thead>
        <tr>
          <GridHead /><GridHead /><GridHead /><GridHead /><GridHead />
          <GridHead>年份</GridHead><GridHead>作者</GridHead><GridHead>标题</GridHead><GridHead>来源</GridHead>
        </tr>
      </thead>
      <tbody>
        {records.map((r, i) => (
          <RecordRow key={i} $unread={r.unread} $selected={r.selected}>
            <Cell $icon><StateDot $on={r.unread} /></Cell>
            <Cell $icon>{r.scroll ? <ScrollIcon /> : <PaperIcon />}</Cell>
            <Cell $icon><StarIcon /></Cell>
            <Cell /><Cell />
            <Cell>{r.year}</Cell>
            <Cell>{r.authors}</Cell>
            <Cell>{r.title}</Cell>
            <Cell>{r.source}</Cell>
          </RecordRow>
        ))}
      </tbody>
    </Grid>
  </Records>
);

const DetailsSection = () => (
  <Details>
    <Tabs role="tablist">
      {["细节", "预览", "综述", "附件", "笔记", "位置"].map((t, i) => (
        <Tab key={t} type="button" role="tab" aria-selected={i === 0} $active={i === 0}>{t}</Tab>
      ))}
    </Tabs>
    <DetailBody>
      <DetailTools>
        <button type="button" aria-label="锁定"><LockIcon /></button>
        <button type="button" aria-label="关闭"><DoorIcon /></button>
        <ToolRule />
        <button type="button" aria-label="复制"><CopyIcon /></button>
        <ToolRule />
        <button type="button" aria-label="清理"><BroomIcon /></button>
        <button type="button" aria-label="收起"><ShrinkIcon /></button>
        <ToolRule />
        <button type="button" aria-label="趋势"><TrendIcon /></button>
      </DetailTools>
      <DetailScroll>
        <FieldTable>
          <colgroup><col width="17" /><col width="127" /><col /></colgroup>
          <thead>
            <tr><GridHead /><GridHead>字段</GridHead><GridHead $open>内容</GridHead></tr>
          </thead>
          <tbody>
            <FieldRow>
              <th colSpan={3} scope="colgroup">
                <GroupCell>
                  <Expander type="button" aria-label="折叠"><Minus /></Expander>
                  主要字段
                </GroupCell>
              </th>
            </FieldRow>
            {fields.map(([name, lines]) => (
              <FieldRow key={name}>
                <td />
                <th scope="row">{name}</th>
                <td>{lines.length ? lines.map((l) => <Line key={l}>{l}</Line>) : null}</td>
              </FieldRow>
            ))}
            <OpenFieldRow>
              <td />
              <th scope="row">关键词</th>
              <td><Line>出勤主义行为</Line><Line>心理</Line><Line>离职意愿</Line></td>
            </OpenFieldRow>
          </tbody>
        </FieldTable>
      </DetailScroll>
    </DetailBody>
  </Details>
);

export default function App() {
  return (
    <Page lang="zh-CN">
      <GlobalStyle />
      <Letterbox>
        <MeetingPill>
          <svg width="22" height="18" viewBox="0 0 22 18" fill="#06cf6b">
            <rect y="8" width="5" height="10" rx="1.500" />
            <rect x="8.500" y="4" width="5" height="14" rx="1.500" />
            <rect x="17" width="5" height="18" rx="1.500" />
          </svg>
          <LiveDot />
          腾讯会议
          <InfoButton type="button" aria-label="信息">
            <svg width="28" height="28" viewBox="0 0 28 28">
              <circle cx="14" cy="14" r="12.700" fill="none" stroke="#a8a8b2" strokeWidth="2.400" />
              <circle cx="14" cy="8.500" r="2" fill="#a8a8b2" />
              <rect x="12.500" y="12.500" width="3" height="9" rx="1.500" fill="#a8a8b2" />
            </svg>
          </InfoButton>
        </MeetingPill>
      </Letterbox>

      <Slide>
        <SlideTitle>文献导入</SlideTitle>
        <Window>
          <TitleBar>
            <svg width="26" height="12" viewBox="0 14 26 12">
              <rect x="1" y="0" width="24" height="26" rx="5" fill="#f2a33a" />
              <path d="M1 0h24v21q0 5-5 5h-9Q2 23 1 15z" fill="#3f68b3" />
              <text x="4" y="19" fontSize="17" fontWeight="700" fontStyle="italic" fill="#e6eefa" fontFamily="Liberation Serif, serif">Ne</text>
            </svg>
            <TitleText>{"NoteExpress - 南昌大学图书馆版 - D:\\NoteExpress 南大版\\出勤主义.ndb"}</TitleText>
            <WindowButtons>
              <button type="button" aria-label="还原">
                <svg width="16" height="7" viewBox="0 0 16 7" fill="none" stroke="#777" strokeWidth="1.500">
                  <path d="M1 0v4q0 2 2 2h7q2 0 2-2V0M15 0v3" />
                </svg>
              </button>
              <button type="button" aria-label="关闭窗口">
                <svg width="6" height="7" viewBox="0 0 6 7" stroke="#777" strokeWidth="1.500"><path d="M0 7l6-7" /></svg>
              </button>
            </WindowButtons>
          </TitleBar>
          <ToolbarSection />
          <Workspace>
            <SidebarSection />
            <Splitter $w={8} />
            <RecordsSection />
            <Splitter $w={9} />
            <DetailsSection />
          </Workspace>
          <Callout />
        </Window>
      </Slide>

      <Letterbox />

      <Speaker>
        <SpeakerInner>
          <svg width="22" height="30" viewBox="0 0 22 30">
            <rect x="5" y="1" width="12" height="20" rx="6" fill="#979a9e" />
            <path d="M2 14q0 10 9 10t9-10M11 24v4M5 28h12" fill="none" stroke="#979a9e" strokeWidth="2" />
          </svg>
          <SpeakerRule />
          <SpeakerName>正在讲话: 鹿花梅;</SpeakerName>
          <svg width="92" height="48" viewBox="0 0 92 48">
            <defs>
              <linearGradient id="fade" x1="0" y1="1" x2="1" y2="0">
                <stop offset="0" stopColor="#58595d" /><stop offset="1" stopColor="#2f3235" />
              </linearGradient>
            </defs>
            <path d="M30 0v32L14 48 2 36q-3-4 0-9z" fill="url(#fade)" />
            <path d="M30 0l16 15-16 17z" fill="#3e4044" />
            <path d="M30 32L56 6q5-5 10 0L88 27q5 5 0 10L78 48 62 32 46 48z" fill="url(#fade)" />
            <path d="M62 32L78 48l11-11q4-5 0-9L76 16z" fill="#424448" />
          </svg>
        </SpeakerInner>
      </Speaker>

      <ChatPill onSubmit={(e) => e.preventDefault()}>
        <button type="button" aria-label="表情">
          <svg width="32" height="32" viewBox="0 0 32 32">
            <circle cx="16" cy="16" r="16" fill="#fff" />
            <g fill="#6d7172"><circle cx="10" cy="11.500" r="2.200" /><circle cx="22" cy="11.500" r="2.200" /><path d="M5.500 18.500h21q-1 9-10.500 9t-10.500-9z" /></g>
          </svg>
        </button>
        <ChatInput placeholder="说点什么..." aria-label="说点什么" />
        <button type="button" aria-label="收起聊天">
          <svg width="12" height="20" viewBox="0 0 12 20"><path d="M11 1l-9 9 9 9" fill="none" stroke="#fff" strokeWidth="2.800" /></svg>
        </button>
      </ChatPill>

      <Corner $v="top" $h="left" />
      <Corner $v="top" $h="right" />
      <Corner $v="bottom" $h="left" />
      <Corner $v="bottom" $h="right" />
    </Page>
  );
}
